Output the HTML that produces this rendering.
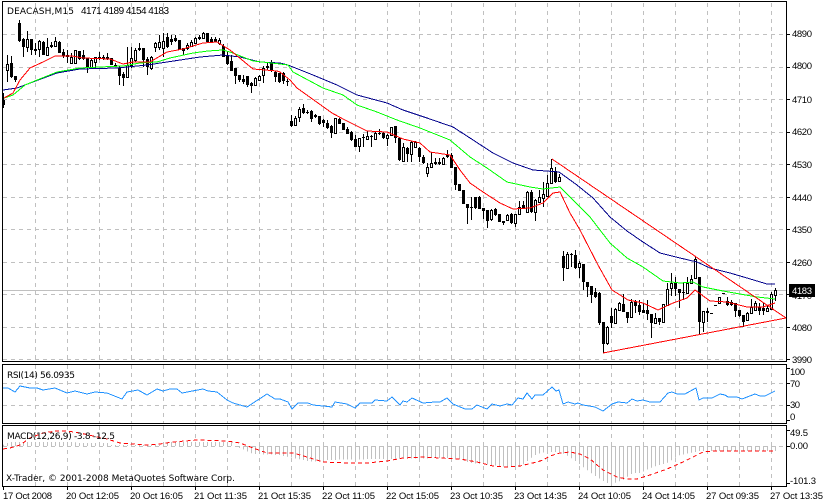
<!DOCTYPE html>
<html><head><meta charset="utf-8"><style>
html,body{margin:0;padding:0;background:#fff;width:824px;height:503px;overflow:hidden}
svg{display:block}
text{font-family:"Liberation Sans",sans-serif;font-size:9.500px;fill:#000}
text.t{font-family:"DejaVu Sans",sans-serif;font-size:9px}
.g{stroke:#c0c0c0;stroke-width:1;stroke-dasharray:4 4;fill:none}
.l{fill:none;stroke-width:1}
</style></head><body>
<svg width="824" height="503" viewBox="0 0 824 503" xmlns="http://www.w3.org/2000/svg">
<defs><pattern id="b" patternUnits="userSpaceOnUse" x="3" y="0" width="4" height="10"><rect x="0" y="0" width="1" height="10" fill="#c0c0c0"/></pattern></defs>
<g shape-rendering="crispEdges">
<path class="g" d="M35.500 3V361M67.500 3V361M99.500 3V361M131.500 3V361M163.500 3V361M195.500 3V361M227.500 3V361M259.500 3V361M291.500 3V361M323.500 3V361M355.500 3V361M387.500 3V361M419.500 3V361M451.500 3V361M483.500 3V361M515.500 3V361M547.500 3V361M579.500 3V361M611.500 3V361M643.500 3V361M675.500 3V361M707.500 3V361M739.500 3V361M771.500 3V361
M35.500 365V423M67.500 365V423M99.500 365V423M131.500 365V423M163.500 365V423M195.500 365V423M227.500 365V423M259.500 365V423M291.500 365V423M323.500 365V423M355.500 365V423M387.500 365V423M419.500 365V423M451.500 365V423M483.500 365V423M515.500 365V423M547.500 365V423M579.500 365V423M611.500 365V423M643.500 365V423M675.500 365V423M707.500 365V423M739.500 365V423M771.500 365V423
M35.500 426V486M67.500 426V486M99.500 426V486M131.500 426V486M163.500 426V486M195.500 426V486M227.500 426V486M259.500 426V486M291.500 426V486M323.500 426V486M355.500 426V486M387.500 426V486M419.500 426V486M451.500 426V486M483.500 426V486M515.500 426V486M547.500 426V486M579.500 426V486M611.500 426V486M643.500 426V486M675.500 426V486M707.500 426V486M739.500 426V486M771.500 426V486
M3 34.500H786M3 67.500H786M3 99.500H786M3 132.500H786M3 164.500H786M3 197.500H786M3 229.500H786M3 262.500H786M3 294.500H786M3 327.500H786M3 359.500H786
M3 383.500H786M3 405.500H786M3 446.500H786"/>
<path d="M3 290.500H786" stroke="#c0c0c0" fill="none"/>
<path stroke="#000" fill="none" d="M3.500 93V108M7.500 55V82M11.500 56V78M15.500 76V82M19.500 20V42M23.500 38V57M27.500 31V52M31.500 39V55M35.500 43V55M39.500 40V57M43.500 41V55M47.500 38V55M51.500 42V48M55.500 37V47M59.500 41V53M63.500 49V58M67.500 50V63M71.500 53V64M75.500 50V64M79.500 51V60M83.500 50V60M87.500 58V73M91.500 58V68M95.500 57V68M99.500 52V60M103.500 55V60M107.500 53V60M111.500 58V65M115.500 63V67M119.500 66V85M123.500 72V86M127.500 47V78M131.500 47V68M135.500 48V62M139.500 43V51M143.500 48V67M147.500 57V75M151.500 56V70M155.500 42V52M159.500 35V50M163.500 33V57M167.500 33V48M171.500 35V45M175.500 35V42M179.500 40V50M183.500 48V55M187.500 43V50M191.500 40V47M195.500 37V43M199.500 35V40M203.500 32V39M207.500 33V42M211.500 37V42M215.500 37V42M219.500 38V45M223.500 44V57M227.500 52V65M231.500 55V71M235.500 68V84M239.500 75V82M243.500 75V84M247.500 76V87M251.500 82V93M255.500 77V86M259.500 75V81M263.500 66V83M267.500 62V70M271.500 60V72M275.500 71V82M279.500 73V83M283.500 72V84M287.500 79V86
M291.500 115V127M295.500 116V126M299.500 107V122M303.500 104V114M307.500 110V114M311.500 110V122M315.500 114V118M319.500 116V125M323.500 119V127M327.500 120V129M331.500 125V138M335.500 118V133M339.500 118V124M343.500 123V130M347.500 127V134M351.500 131V141M355.500 135V147M359.500 138V152M363.500 134V147M367.500 131V140M371.500 135V147M375.500 131V140M379.500 129V135M383.500 132V139M387.500 134V146M391.500 127V136M395.500 126V143M399.500 137V161M403.500 143V162M407.500 147V162M411.500 141V162M415.500 141V148M419.500 147V162M423.500 155V164M427.500 163V177M431.500 152V168M435.500 158V165M439.500 158V165M443.500 157V165M447.500 150V158M451.500 153V168M455.500 167V190M459.500 184V191M463.500 190V204M467.500 204V224M471.500 197V220M475.500 197V209M479.500 196V209M483.500 208V219M487.500 210V228M491.500 209V221M495.500 208V216M499.500 214V222M503.500 221V225M507.500 214V221M511.500 213V224M515.500 214V227M519.500 201V215M523.500 201V209M527.500 191V212M531.500 190V213M535.500 199V221M539.500 190V203M543.500 182V207M547.500 175V197M551.500 159V183M555.500 167V183M559.500 174V182
M563.500 251V281M567.500 252V269M571.500 253V267M575.500 250V269M579.500 261V278M583.500 264V290M587.500 282V297M591.500 286V303M595.500 288V298M599.500 292V325M603.500 322V353M607.500 326V345M611.500 308V328M615.500 308V324M619.500 302V311M623.500 294V312M627.500 312V323M631.500 299V318M635.500 300V313M639.500 300V315M643.500 303V313M647.500 300V320M651.500 314V338M655.500 313V324M659.500 318V325M663.500 304V323M667.500 283V306M671.500 273V296M675.500 277V296M679.500 289V308M683.500 282V300M687.500 277V294M691.500 275V284M695.500 256V279M699.500 277V335M703.500 311V332M707.500 308V322M719.500 297V304M727.500 297V306M731.500 300V306M735.500 303V317M739.500 310V317M743.500 315V327M747.500 312V321M751.500 299V314M755.500 301V311M759.500 303V315M763.500 303V315M767.500 305V312M771.500 292V310M775.500 288V301"/>
<path fill="#000" d="M2 100h3v5h-3zM10 63h3v14h-3zM14 76h3v4h-3zM18 23h3v18h-3zM22 39h3v8h-3zM30 39h3v11h-3zM34 49h3v2h-3zM42 42h3v13h-3zM50 45h3v2h-3zM58 42h3v11h-3zM62 52h3v4h-3zM66 55h3v2h-3zM78 51h3v8h-3zM82 55h3v4h-3zM86 58h3v10h-3zM98 57h3v2h-3zM102 57h3v2h-3zM106 57h3v2h-3zM110 58h3v7h-3zM114 65h3v1h-3zM118 68h3v8h-3zM122 74h3v4h-3zM138 48h3v2h-3zM142 48h3v12h-3zM146 59h3v8h-3zM166 37h3v10h-3zM170 39h3v3h-3zM174 38h3v3h-3zM178 40h3v10h-3zM182 48h3v3h-3zM198 37h3v2h-3zM206 33h3v9h-3zM210 39h3v3h-3zM214 39h3v3h-3zM222 46h3v11h-3zM226 55h3v9h-3zM230 61h3v10h-3zM234 68h3v8h-3zM238 75h3v5h-3zM242 79h3v3h-3zM246 76h3v9h-3zM250 83h3v3h-3zM266 66h3v2h-3zM270 62h3v9h-3zM274 72h3v5h-3zM278 73h3v9h-3zM282 73h3v8h-3zM286 81h3v1h-3z
M290 121h3v5h-3zM302 108h3v5h-3zM306 112h3v1h-3zM310 111h3v8h-3zM314 115h3v2h-3zM318 116h3v8h-3zM322 120h3v3h-3zM326 123h3v5h-3zM330 126h3v7h-3zM338 119h3v5h-3zM342 123h3v7h-3zM346 129h3v5h-3zM350 132h3v8h-3zM354 139h3v8h-3zM362 137h3v1h-3zM370 136h3v1h-3zM378 133h3v1h-3zM382 133h3v5h-3zM394 126h3v12h-3zM398 138h3v22h-3zM406 148h3v6h-3zM418 148h3v9h-3zM422 157h3v6h-3zM434 162h3v2h-3zM438 162h3v2h-3zM446 155h3v2h-3zM450 155h3v13h-3zM454 167h3v18h-3zM458 184h3v7h-3zM462 190h3v14h-3zM466 204h3v4h-3zM470 207h3v1h-3zM474 197h3v11h-3zM478 197h3v12h-3zM482 208h3v3h-3zM486 210h3v11h-3zM494 209h3v6h-3zM498 214h3v8h-3zM502 221h3v2h-3zM510 214h3v9h-3zM522 205h3v3h-3zM530 192h3v20h-3zM554 171h3v11h-3z
M562 256h3v12h-3zM570 254h3v1h-3zM574 255h3v13h-3zM582 264h3v18h-3zM586 282h3v5h-3zM590 286h3v9h-3zM594 292h3v5h-3zM598 293h3v30h-3zM602 322h3v22h-3zM610 316h3v7h-3zM622 304h3v8h-3zM626 312h3v6h-3zM634 301h3v5h-3zM638 305h3v7h-3zM642 310h3v3h-3zM646 310h3v4h-3zM650 314h3v9h-3zM658 318h3v4h-3zM674 283h3v6h-3zM678 289h3v4h-3zM682 292h3v1h-3zM698 277h3v45h-3zM706 311h3v2h-3zM710 313h3v1h-3zM714 305h3v1h-3zM722 293h3v1h-3zM726 301h3v4h-3zM730 302h3v3h-3zM734 303h3v8h-3zM738 310h3v6h-3zM742 315h3v7h-3zM758 307h3v4h-3zM762 308h3v3h-3z"/>
<path fill="#fff" stroke="#000" d="M6.500 64.500h2v6h-2zM26.500 39.500h2v8h-2zM38.500 41.500h2v8h-2zM46.500 47.500h2v8h-2zM54.500 41.500h2v5h-2zM70.500 57.500h2v6h-2zM74.500 50.500h2v13h-2zM90.500 60.500h2v7h-2zM94.500 57.500h2v5h-2zM126.500 65.500h2v12h-2zM130.500 58.500h2v7h-2zM134.500 50.500h2v10h-2zM150.500 57.500h2v11h-2zM154.500 43.500h2v4h-2zM158.500 42.500h2v5h-2zM162.500 41.500h2v7h-2zM186.500 45.500h2v3h-2zM190.500 42.500h2v4h-2zM194.500 38.500h2v5h-2zM202.500 33.500h2v5h-2zM218.500 40.500h2v3h-2zM254.500 78.500h2v7h-2zM258.500 76.500h2v4h-2zM262.500 68.500h2v7h-2z
M294.500 118.500h2v7h-2zM298.500 109.500h2v8h-2zM334.500 118.500h2v15h-2zM358.500 138.500h2v8h-2zM366.500 136.500h2v3h-2zM374.500 133.500h2v6h-2zM386.500 135.500h2v3h-2zM390.500 127.500h2v8h-2zM402.500 147.500h2v14h-2zM410.500 142.500h2v12h-2zM414.500 142.500h2v5h-2zM426.500 167.500h2v6h-2zM430.500 163.500h2v4h-2zM442.500 158.500h2v6h-2zM490.500 210.500h2v9h-2zM506.500 215.500h2v5h-2zM514.500 214.500h2v9h-2zM518.500 207.500h2v7h-2zM526.500 192.500h2v20h-2zM534.500 200.500h2v12h-2zM538.500 197.500h2v5h-2zM542.500 194.500h2v4h-2zM546.500 183.500h2v13h-2zM550.500 168.500h2v15h-2zM558.500 177.500h2v4h-2z
M566.500 254.500h2v14h-2zM578.500 263.500h2v4h-2zM606.500 327.500h2v16h-2zM614.500 309.500h2v14h-2zM618.500 303.500h2v7h-2zM630.500 302.500h2v15h-2zM654.500 318.500h2v5h-2zM662.500 304.500h2v18h-2zM666.500 289.500h2v16h-2zM670.500 283.500h2v5h-2zM686.500 283.500h2v10h-2zM690.500 279.500h2v4h-2zM694.500 259.500h2v19h-2zM702.500 311.500h2v11h-2zM718.500 297.500h2v6h-2zM746.500 313.500h2v7h-2zM750.500 307.500h2v6h-2zM754.500 303.500h2v7h-2zM766.500 308.500h2v3h-2zM770.500 294.500h2v15h-2zM774.500 290.500h2v5h-2z"/>
</g>
<g shape-rendering="crispEdges">
<polyline class="l" stroke="#00008b" points="3,90 17,88 33,82 57,73 80,69 117,68 147,65 167,62 200,57 223,55 240,57 260,62 280,63 288,65 313,75 337,85 357,95 387,103 403,110 427,118 453,127 470,138 493,153 513,163 533,170 559,172 577,185 593,198 610,217 627,231 643,242 660,253 680,258 697,262 710,268 730,273 747,278 767,284 775,284"/>
<polyline class="l" stroke="#00ff00" points="4,98 13,95 25,85 42,78 57,72 80,68 100,67 123,66 140,63 157,62 170,58 193,53 208,51 223,50 233,53 253,61 280,64 288,65 293,72 323,88 343,95 357,105 377,112 397,120 420,128 450,140 470,157 487,168 507,182 530,187 543,189 560,187 570,197 590,217 610,243 627,258 643,267 663,281 680,283 693,282 703,287 723,291 740,294 757,297 775,299"/>
<polyline class="l" stroke="#ff0000" points="4,98 13,93 20,80 30,68 43,62 55,56 72,56 83,58 110,59 123,64 133,62 150,62 167,52 183,49 203,43 217,42 230,50 253,69 277,71 280,72 290,80 297,88 332,113 343,119 367,131 387,132 403,139 420,143 430,152 450,155 460,170 470,183 483,192 500,203 513,209 530,208 543,203 553,193 560,192 570,213 580,230 598,265 612,290 628,300 643,303 658,310 673,303 687,298 695,290 710,301 727,302 747,307 763,307 775,303"/>
<path class="l" stroke="#ff0000" d="M552 159L786 318"/>
<path class="l" stroke="#ff0000" stroke-width="2" d="M603 353L786 318"/>
<polyline class="l" stroke="#1e90ff" points="3,388 8,388 15,392 20,386 30,388 37,388 43,390 55,388 67,393 75,391 87,394 95,392 107,393 122,399 127,392 138,390 147,395 157,389 163,391 170,389 177,389 182,393 203,389 208,391 217,392 227,400 233,403 247,407 267,394 275,399 280,399 288,402 292,409 298,403 308,403 313,405 323,406 332,407 335,402 347,404 355,408 360,403 372,403 375,400 387,401 392,397 400,405 403,401 407,402 412,398 423,403 435,402 440,402 447,398 453,404 465,409 472,409 477,405 487,409 492,404 500,406 507,404 512,405 518,398 523,399 527,393 532,399 535,395 543,395 552,387 556,391 559,390 563,404 568,402 575,404 578,403 583,405 595,407 603,411 612,404 618,402 627,403 632,399 637,401 643,400 650,402 655,402 660,402 668,393 672,392 677,394 685,394 696,388 699,400 703,398 712,398 720,394 725,395 728,397 737,397 742,399 755,394 760,396 765,396 775,391"/>
<polygon fill="url(#b)" points="3,446 3,445 10,442 75,442 76,443 110,443 111,445 160,445 161,442 233,442 233,446"/>
<polygon fill="url(#b)" points="233,446 240,448 253,454 280,455 293,458 313,462 323,460 380,459 445,458 460,459 470,463 493,465 507,467 520,467 535,455 545,452 560,452 570,457 577,462 587,470 597,477 607,483 612,484 623,480 633,473 640,473 653,467 667,463 680,455 690,453 700,451 776,451 776,446"/>
<polyline class="l" stroke="#ff0000" stroke-dasharray="4 3" points="3,449 10,448 20,445 30,438 43,433 57,431 67,431 80,433 93,436 107,439 120,443 133,444 147,445 160,444 173,442 197,440 227,441 240,443 253,448 267,453 280,453 293,453 307,457 323,462 347,463 367,463 387,461 403,458 423,457 440,458 460,459 477,462 493,466 507,467 520,466 537,462 543,460 550,456 560,453 570,452 580,454 590,459 603,470 617,477 627,479 637,479 650,475 667,469 683,462 697,455 703,452 713,451 775,451"/>
</g>
<g shape-rendering="crispEdges" stroke="#000" fill="none">
<path d="M2.500 1.500H786.500V361.500H2.500ZM2.500 364.500H786.500V423.500H2.500ZM2.500 425.500H786.500V486.500H2.500Z"/>
<path d="M786 34.500h4M786 67.500h4M786 99.500h4M786 132.500h4M786 164.500h4M786 197.500h4M786 229.500h4M786 262.500h4M786 294.500h4M786 327.500h4M786 359.500h4M786 383.500h4M786 405.500h4M786 446.500h4M786 368.500h4M786 420.500h4M786 430.500h4M786 483.500h4
M3.500 486v4M67.500 486v4M131.500 486v4M195.500 486v4M259.500 486v4M323.500 486v4M387.500 486v4M451.500 486v4M515.500 486v4M579.500 486v4M643.500 486v4M707.500 486v4M771.500 486v4"/>
</g>
<text class="t" x="7" y="14" textLength="67">DEACASH,M15</text>
<text x="81" y="14" textLength="88" style="font-size:10px">4171 4189 4154 4183</text>
<text class="t" x="7" y="378" textLength="68">RSI(14) 56.0935</text>
<text class="t" x="7" y="439" textLength="108">MACD(12,26,9) -3.8 -12.5</text>
<text class="t" x="6" y="481" textLength="229">X-Trader, © 2001-2008 MetaQuotes Software Corp.</text>
<g>
<text x="792" y="37" textLength="20">4890</text>
<text x="792" y="69" textLength="20">4800</text>
<text x="792" y="103" textLength="20">4710</text>
<text x="792" y="135" textLength="20">4620</text>
<text x="792" y="168" textLength="20">4530</text>
<text x="792" y="201" textLength="20">4440</text>
<text x="792" y="233" textLength="20">4350</text>
<text x="792" y="266" textLength="20">4260</text>
<text x="792" y="299" textLength="20">4170</text>
<rect x="789" y="284" width="26" height="13" fill="#000"/>
<text x="792" y="294" textLength="20" style="fill:#fff">4183</text>
<text x="792" y="331" textLength="20">4080</text>
<text x="792" y="363" textLength="20">3990</text>
<text x="790" y="375" textLength="15">100</text>
<text x="790" y="387" textLength="10">70</text>
<text x="790" y="408" textLength="10">30</text>
<text x="790" y="420" textLength="5">0</text>
<text x="790" y="436" textLength="18">49.5</text>
<text x="790" y="449" textLength="18">0.00</text>
<text x="790" y="484" textLength="26">-101.3</text>
</g>
<g>
<text x="3" y="499" textLength="49">17 Oct 2008</text>
<text x="66" y="499" textLength="53">20 Oct 12:05</text>
<text x="130" y="499" textLength="53">20 Oct 16:05</text>
<text x="194" y="499" textLength="53">21 Oct 11:35</text>
<text x="258" y="499" textLength="53">21 Oct 15:35</text>
<text x="322" y="499" textLength="53">22 Oct 11:05</text>
<text x="386" y="499" textLength="53">22 Oct 15:05</text>
<text x="450" y="499" textLength="53">23 Oct 10:35</text>
<text x="514" y="499" textLength="53">23 Oct 14:35</text>
<text x="578" y="499" textLength="53">24 Oct 10:05</text>
<text x="642" y="499" textLength="53">24 Oct 14:05</text>
<text x="706" y="499" textLength="53">27 Oct 09:35</text>
<text x="770" y="499" textLength="53">27 Oct 13:35</text>
</g>
</svg>
</body></html>
